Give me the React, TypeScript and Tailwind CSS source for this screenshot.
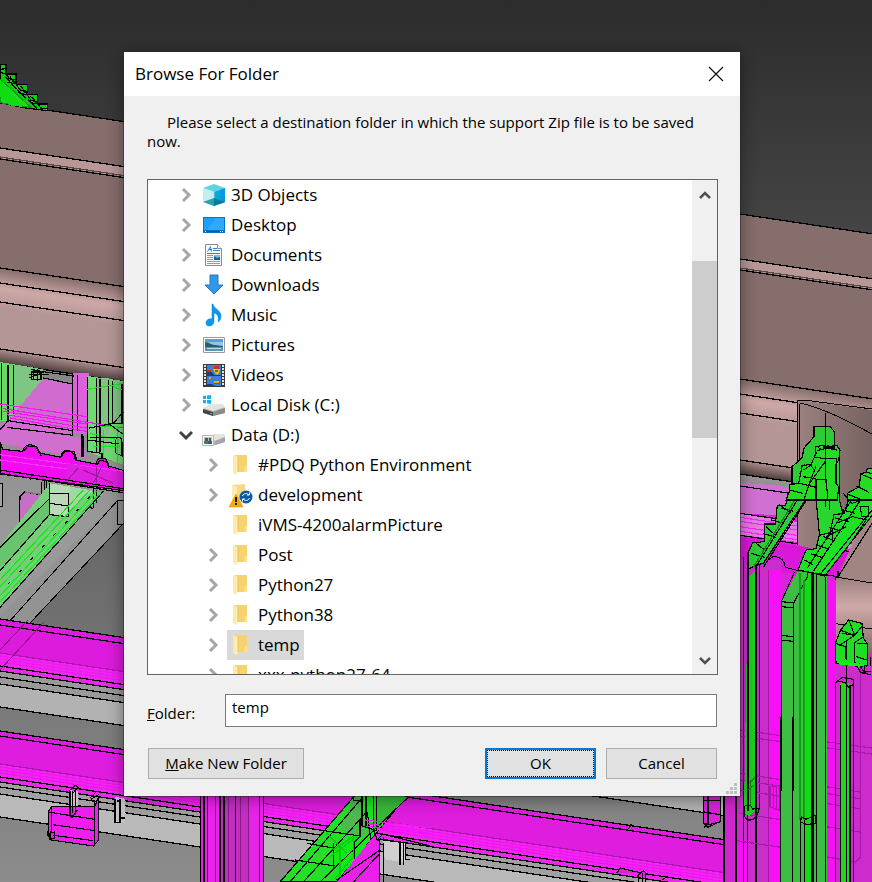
import type { ReactNode } from "react"

type IconName =
  | "objects"
  | "desktop"
  | "documents"
  | "downloads"
  | "music"
  | "pictures"
  | "videos"
  | "diskC"
  | "diskD"
  | "folder"
  | "sync"

type Row = {
  label: string
  icon: IconName
  child?: boolean
  open?: boolean
  leaf?: boolean
  selected?: boolean
}

const rows: Row[] = [
  { label: "3D Objects", icon: "objects" },
  { label: "Desktop", icon: "desktop" },
  { label: "Documents", icon: "documents" },
  { label: "Downloads", icon: "downloads" },
  { label: "Music", icon: "music" },
  { label: "Pictures", icon: "pictures" },
  { label: "Videos", icon: "videos" },
  { label: "Local Disk (C:)", icon: "diskC" },
  { label: "Data (D:)", icon: "diskD", open: true },
  { label: "#PDQ Python Environment", icon: "folder", child: true },
  { label: "development", icon: "sync", child: true },
  { label: "iVMS-4200alarmPicture", icon: "folder", child: true, leaf: true },
  { label: "Post", icon: "folder", child: true },
  { label: "Python27", icon: "folder", child: true },
  { label: "Python38", icon: "folder", child: true },
  { label: "temp", icon: "folder", child: true, selected: true },
  { label: "xxx-python27-64", icon: "folder", child: true },
]

const folderShape = (
  <>
    <path d="M5 1h12v17H5z" fill="#f6d271" />
    <path d="M15 12h2v6h-3z" fill="#ffe08a" />
    <path d="M3 1l5 2v15l-2 3-3-2z" fill="#ffe9a6" />
    <path d="M8 3v15l-2 3V4z" fill="#fff0bd" />
    <path d="M8 3v15" stroke="#e9bf55" />
  </>
)

const icons: Record<IconName, ReactNode> = {
  objects: (
    <>
      <path d="M11 0l11 4-11 4L0 4z" fill="#5ed3e2" />
      <path d="M0 4l11 4v14L0 18z" fill="#c5eef0" />
      <path d="M22 4L11 8v14l11-4z" fill="#05a9d6" />
      <path d="M22 4l-5 2v14l5-2z" fill="#0899dd" />
      <path d="M0 18l11-4v8z" fill="#2c9fae" />
      <path d="M11 14l11 4-11 4z" fill="#087d98" />
      <path d="M11 8v6" stroke="#8ae0ea" />
    </>
  ),
  desktop: (
    <>
      <path d="M0 3h22v16H0z" fill="#0b72c9" />
      <path d="M1 4h20v12H1z" fill="#1aa0f8" />
      <path d="M13 4h8v12H4z" fill="#2fa9fb" />
      <path d="M1 17h20v1H1z" fill="#085ba6" />
      <path d="M2 17h1v1H2zM17 17h1v1h-1zM19 17h1v1h-1z" fill="#fff" />
    </>
  ),
  documents: (
    <>
      <path d="M2.500 .5h12l4 4v17h-16z" fill="#fafafa" stroke="#8b8b8b" />
      <path d="M14.500 .5v4h4" fill="#fff" stroke="#8b8b8b" />
      <path d="M4.500 7.500l3-5 1 5M6 5.500h3" fill="none" stroke="#2387d6" />
      <path d="M10 4.500h4M10 6.500h7M4 9.500h13" stroke="#2387d6" />
      <path d="M4 11.500h6M4 13.500h6M4 15.500h6M4 17.500h13M4 19.500h13" stroke="#9a9a9a" />
      <path d="M11 11h6v5h-6z" fill="#1c5f96" />
      <path d="M11 11h6v2l-3 1-3-2z" fill="#72b9ea" />
    </>
  ),
  downloads: (
    <path d="M7 1h8v10h5l-9 9-9-9h5z" fill="#3496e8" stroke="#2079c6" />
  ),
  music: (
    <path
      d="M10 0c1 5 8 6 8 12 0 3-1 5-3 6 1-5 0-8-4-9v8c0 4-3 5-5 5s-3-1-3-3c0-3 3-5 6-4V0z"
      fill="#0c96ec"
      stroke="#0a83d3"
      strokeWidth=".5"
    />
  ),
  pictures: (
    <>
      <path d="M.5 3.500h21v15H.5z" fill="#fff" stroke="#9a9a9a" />
      <path d="M2 5h18v12H2z" fill="#8fc6ef" />
      <path d="M2 5h18v3H2z" fill="#549fdc" />
      <path d="M2 8c4 0 6 3 10 3 3 0 5 1 8 1v1H2z" fill="#2e5f58" />
      <path d="M2 13h18v4H2z" fill="#5c93b6" />
      <path d="M4 14.500h14" stroke="#b9dcef" />
    </>
  ),
  videos: (
    <>
      <path d="M0 0h22v23H0z" fill="#3a3a3a" />
      <path d="M2 1v21M20 1v21" stroke="#e4e4e4" strokeWidth="2" strokeDasharray="2 1" />
      <path d="M4 1h14v10H4zM4 12h14v10H4z" fill="#3c80d8" />
      <path d="M4 8h5l2 3H4zM4 20h5l3 2H4z" fill="#1c3f74" />
      <path d="M10 5h7l-1 4-2 2-2-2z" fill="#e5c31b" />
      <path d="M11 2h5l1 3h-6zM4 6h4v2H4zM11 18h6v2h-6z" fill="#cf2d26" />
      <path d="M6 13h2v2H6zM11 17h5v2h-5z" fill="#e8a91d" />
      <path d="M12 6h3v2h-3z" fill="#2e8a41" />
    </>
  ),
  diskC: (
    <>
      <path d="M0 15l7-4h13l2 3v5l-12 3-10-4z" fill="#b9b9b9" />
      <path d="M0 14l7-4h13l2 3-12 4z" fill="#e3e3e3" />
      <path d="M0 15l10 3v4L0 19z" fill="#464646" />
      <path d="M10 18l12-4v5l-12 3z" fill="#8b8b8b" />
      <path d="M7 19h2v1H7z" fill="#38d451" />
      <path d="M0 2l3-.4V5H0zM4 1.500L8 1v4H4zM0 6h3v3.500L0 9zM4 6h4v4l-4-.5z" fill="#10b3f0" />
    </>
  ),
  diskD: (
    <>
      <path d="M6 13l6-3h9l1 3v5l-10 3H6z" fill="#b9b9b9" />
      <path d="M8 12l4-2h9l1 3-10 4z" fill="#e4e4e4" />
      <path d="M12 17l10-4v5l-10 3z" fill="#a6a6a6" />
      <path d="M-.5 11.500h11v10h-11z" fill="#fff" stroke="#b4b4b4" />
      <path d="M1 13h8v7H1z" fill="#a9c5bc" />
      <path d="M2 14h3v3H2zM6 14h2v3H6z" fill="#7c4b32" />
      <path d="M1 17h4v3H1z" fill="#3e7c68" />
      <path d="M5 17h4v3H5z" fill="#315a8c" />
    </>
  ),
  folder: folderShape,
  sync: (
    <>
      <path d="M2 1l13-1v16H2z" fill="#f5d988" />
      <path d="M2 1l5 2v14H2z" fill="#ffedb4" />
      <path d="M6 10l7 13H-1z" fill="#f8ab0c" stroke="#e2860a" strokeWidth=".5" />
      <path d="M6 13v5M6 19v2" stroke="#191919" strokeWidth="2" />
      <circle cx="16" cy="13" r="6.500" fill="#0c59a5" />
      <path d="M12.500 12c1-3 5-3 6.500-1M19.500 14c-1 3-5 3-6.500 1M19.500 8.500V11H17M12.500 17.500V15H15" fill="none" stroke="#fff" />
    </>
  ),
}

function Icon({ name }: { name: IconName }) {
  return (
    <svg viewBox="0 0 22 23" className="h-[23px] w-[22px] shrink-0 overflow-visible" aria-hidden="true">
      {icons[name]}
    </svg>
  )
}

function TreeRow({ row }: { row: Row }) {
  return (
    <li role="treeitem" aria-selected={!!row.selected} className={row.child ? "flex h-[30px] pl-[51px]" : "flex h-[30px] pl-6"}>
      {row.leaf ? (
        <span className="w-7 shrink-0" />
      ) : (
        <button type="button" className="flex w-7 shrink-0 items-center justify-center pr-px">
          <svg viewBox="0 0 14 14" className="h-[14px] w-[14px]" fill="none" strokeWidth="3">
            {row.open ? (
              <path d="M1 4l6 6 6-6" stroke="#404040" />
            ) : (
              <path d="M4 1l6 6-6 6" stroke="#a6a6a6" />
            )}
          </svg>
        </button>
      )}
      <span className={row.selected ? "flex items-center gap-[6px] bg-[#d9d9d9] pr-1 pl-[3px]" : "flex items-center gap-[6px] pr-1 pl-[3px]"}>
        <Icon name={row.icon} />
        <span className="text-[17px] leading-[30px] whitespace-nowrap">{row.label}</span>
      </span>
    </li>
  )
}

// Long beams all fall at the same rate, so each edge is given by its height at the left side.
const at = (y: number, x: number) => y + x * 0.15

function Beam({ from, to, fill, x1 = 0, x2 = 872 }: { from: number; to: number; fill: string; x1?: number; x2?: number }) {
  return <polygon points={`${x1},${at(from, x1)} ${x2},${at(from, x2)} ${x2},${at(to, x2)} ${x1},${at(to, x1)}`} fill={fill} stroke="none" />
}

function Edges({ ys, x1 = 0, x2 = 872, color = "#000" }: { ys: number[]; x1?: number; x2?: number; color?: string }) {
  return (
    <>
      {ys.map((y) => (
        <path key={y} d={`M${x1} ${at(y, x1)}L${x2} ${at(y, x2)}`} stroke={color} strokeWidth="1.300" />
      ))}
    </>
  )
}

// Detailed parts are drawn on a grid three times finer than the scene.
function Part({ x, y, children }: { x: number; y: number; children: ReactNode }) {
  return (
    <g transform={`translate(${x} ${y}) scale(0.33333)`} stroke="#000" strokeWidth="3.600" fill="none">
      {children}
    </g>
  )
}

function Scene() {
  return (
    <svg
      viewBox="0 0 872 882"
      preserveAspectRatio="xMidYMid slice"
      shapeRendering="crispEdges"
      className="absolute inset-0 h-full w-full"
      aria-hidden="true"
    >
      <defs>
        <linearGradient id="sky" x1="0" y1="0" x2="0" y2="1">
          <stop offset="0" stopColor="#2c2c2c" />
          <stop offset=".26" stopColor="#444444" />
          <stop offset=".44" stopColor="#8c8c8c" />
          <stop offset=".62" stopColor="#9a9a9a" />
          <stop offset="1" stopColor="#888888" />
        </linearGradient>
        <linearGradient id="floor" x1="0" y1="520" x2="0" y2="882" gradientUnits="userSpaceOnUse">
          <stop offset="0" stopColor="#666666" />
          <stop offset="1" stopColor="#8c8c8c" />
        </linearGradient>
        <linearGradient id="lip" x1="0" y1="268" x2="0" y2="288" gradientUnits="userSpaceOnUse">
          <stop offset="0" stopColor="#866e6c" />
          <stop offset="1" stopColor="#cda8a7" />
        </linearGradient>
        <linearGradient id="lipFade" x1="0" y1="288" x2="0" y2="308" gradientUnits="userSpaceOnUse">
          <stop offset="0" stopColor="#cda8a7" />
          <stop offset="1" stopColor="#b59696" />
        </linearGradient>
        <linearGradient id="under" x1="0" y1="348" x2="0" y2="363" gradientUnits="userSpaceOnUse">
          <stop offset="0" stopColor="#b59493" />
          <stop offset="1" stopColor="#4d3f3e" />
        </linearGradient>
        <linearGradient id="tube" x1="0" y1="570" x2="0" y2="662" gradientUnits="userSpaceOnUse">
          <stop offset="0" stopColor="#8f7674" />
          <stop offset=".4" stopColor="#cfaaa8" />
          <stop offset="1" stopColor="#765f5d" />
        </linearGradient>
        <linearGradient id="cut" x1="798" y1="0" x2="872" y2="0" gradientUnits="userSpaceOnUse">
          <stop offset="0" stopColor="#9b8180" />
          <stop offset="1" stopColor="#776361" />
        </linearGradient>
      </defs>
      <rect width="872" height="882" fill="url(#sky)" />

      {/* floor and diagonal grey rail */}
      <path d="M124 522L30 622 0 655V882H872V560H124z" fill="url(#floor)" />
      <path d="M0 615L118 500h6v23L0 655z" fill="#939393" />
      <path d="M118 500L0 632M124 523L0 655M117 500h7M117 500v24h7" stroke="#000" fill="none" />

      {/* upper magenta beam and the grey rail under it */}
      <Beam from={619} to={671} fill="#dc1bdc" />
      <Beam from={653} to={676} fill="#e92ae9" />
      <Edges ys={[653]} color="#b414b4" />
      <Edges ys={[656, 659, 662]} color="#f516f5" />
      <Beam from={671} to={684} fill="#999999" />
      <Beam from={684} to={707} fill="#b2b2b2" />
      <Edges ys={[619, 625, 666, 671, 677, 684, 707]} />
      <path d="M44 622L0 670M28 620L0 650" stroke="#8f128f" fill="none" />

      {/* lower magenta beam */}
      <Beam from={731} to={782} fill="#df1ddf" />
      <Beam from={764} to={782} fill="#ea29ea" />
      <Edges ys={[764]} color="#b414b4" />
      <Edges ys={[767, 770, 773]} color="#f811f8" />
      <Beam from={782} to={794} fill="#a0a0a0" />
      <Beam from={794} to={817} fill="#b9b9b9" />
      <Edges ys={[731, 736, 777, 782, 787, 794, 817]} />

      {/* long brown beam */}
      <Beam from={103} to={149} fill="#866e6c" />
      <Beam from={148} to={158} fill="#b89797" />
      <Beam from={158} to={268} fill="#866e6c" />
      <g transform="matrix(1 .15 0 1 0 0)">
        <path d="M0 268h872v21H0z" fill="url(#lip)" />
        <path d="M0 288h872v20H0z" fill="url(#lipFade)" />
        <path d="M0 308h872v41H0z" fill="#b59696" />
        <path d="M0 348h872v15H0z" fill="url(#under)" />
      </g>
      <Edges ys={[157]} color="#5b4a49" />
      <Edges ys={[103, 148, 159, 268, 283, 302, 349, 363]} />

      {/* green rack above the beam */}
      <Part x={0} y={50}>
        <path d="M0 44h18v28h30v24h-8l12 8h30v22h-8l10 8h28v24h-8l10 4h28v20L70 173 0 158z" fill="#12c912" />
        <path d="M0 88l30 26 62 58-92-14z" fill="#24d826" stroke="#0a9c0d" />
        <path d="M0 88l48 56 20 27L30 166 0 140z" fill="#0fdd12" stroke="none" />
        <path d="M0 66l18 7 30 2v20l-10 8M2 58l16-2M18 72l10 14 20 4M30 80l12 14M48 102l12 18 20 4M62 108l12 16M80 132l12 18 18 6M90 138l16 14M112 160l10 14 18 2M16 80l32 36M46 112l32 34M84 148l28 28M20 96l30 6M54 128l26 6M94 158l18 4" />
      </Part>

      {/* pink and green frames, left */}
      <Part x={0} y={350}>
        <path d="M130 85l90 20v150L0 228z" fill="#d06cd0" stroke="none" />
        <path d="M0 36l130 22v28L20 214l-20-4z" fill="#7fc583" stroke="none" />
        <path d="M0 36l42 8v150l-20 20H0z" fill="#68da68" stroke="none" />
        <path d="M218 70h48v180h-48z" fill="#da63da" stroke="none" />
        <path d="M262 78l110 15v252l-110-40z" fill="#71d873" stroke="none" />
        <path d="M288 84h38v220h-38zM340 92h28v130h-28z" fill="#83c486" stroke="none" />
        <path d="M0 228l250 36 6 62L0 280z" fill="#cf70cf" stroke="none" />
        <path d="M24 212l194 30M20 232l200 24M22 214L0 240" />
        <path d="M4 40v170M24 46v170M40 46v146M218 72v182M232 74v168M262 80v226M290 84v224M300 86v220M326 90v132M338 92v130M366 98v120" />
        <path d="M92 58l44 8M94 66h30v22H94zM100 56v34M112 56v36M122 62v28M86 74h60M88 84l48-20M130 84l88 18M136 66l86 12M246 252v70M250 258v64M262 304l44 6v40M340 220l30-34M330 220h40M346 268c0 0 20-16 20 10v40l-20-10z" />
        <path d="M10 176l360 58M10 184l250 38M20 194l240 40M30 204l230 40M0 162l260 38" stroke="#f01bf0" />
        <path d="M250 120l120-20M282 230h70v110M310 240v96M270 250l86 20M280 290h80M340 110l24 10" stroke="#16e51a" />
        <path d="M268 234l60-12 40 30M270 262h90M262 270l96 12M300 240v60" />
        <path d="M0 276l8 22 60 6c4-26 42-28 48 4l66 14c4-30 40-28 44 8l62 12c6-26 34-24 38 6l46 14v60L0 372z" fill="#f20cf2" />
        <path d="M0 314l370 50M0 330l370 50" stroke="#ff35ff" />
        <path d="M200 340l170 28v50l-176-26z" fill="#e020e0" stroke="none" />
        <path d="M70 304l12-14h28l14 28M184 320l10-16h28l10 30M0 360l370 56M0 370l370 58M290 346l10-16 20 6 8 20M30 368l-4 10M96 374l-6 14" />
        <path d="M234 356l-34 36M290 350v50M250 360l90 40M310 340l-30 60" stroke="#9d179d" />
        <path d="M0 400h8v70H0" fill="#a3a3a3" />
        <path d="M60 440l14-14 70 12v60l-44 32-42-6z" fill="#c76fc7" />
        <path d="M74 426l128 18v92l-140-14" stroke="#777" />
        <path d="M124 396v50M134 394v60M140 394v60M150 398v50" />
        <path d="M150 400l160 30L0 772V588z" fill="#74cf78" stroke="none" />
        <path d="M150 446v50L0 654V588z" fill="#68c56d" stroke="none" />
        <path d="M150 400l62 10-8 90-54-8z" fill="#b9d9b9" stroke="none" />
        <path d="M210 410l70 12-76 60z" fill="#9fd8a2" stroke="none" />
        <path d="M148 446L0 592M148 494L0 662M148 400v94l58 6v-70h-56M150 460l56 8M280 474v-58M290 460v-40M264 470l16 6" />
        <path d="M250 420L0 690M270 420L0 710M290 424L0 738M300 430L0 756" stroke="#1ae61e" />
        <path d="M310 424L0 772" />
        <path d="M270 440L0 728" strokeDasharray="10 40" />
      </Part>

      {/* foot bracket, left */}
      <Part x={0} y={600}>
        <path d="M206 570l28 4v70l-28-4zM344 590l30 6v72l-30-4z" fill="#c8c0c8" stroke="none" />
        <path d="M146 632l10-12h128l12-30v130l-16 18-126-18-10-14z" fill="#ec1fec" />
        <path d="M154 622v72l-10 14M150 700l12-4 2 18-14 4zM284 600v134M144 636l140 22M158 674l128 18M160 706l120 16M210 574v70M218 572v66M226 570v66M206 574l20-18 8 6-14 16M206 644l10 8 16-22M270 594l20-20M272 598l24-14" />
        <path d="M346 598v70h14v-70M360 600v60M350 604h14M364 654h12" strokeWidth="5" />
      </Part>

      {/* post and green diagonal under the dialog */}
      <Part x={120} y={790}>
        <path d="M242 10h188v266H242z" fill="#c12fc1" stroke="none" />
        <path d="M242 10h58v266h-58zM386 10h46v266h-46z" fill="#e823e8" stroke="none" />
        <path d="M242 18v258M252 18v258M262 18v258M300 18v258M312 18v258M346 18v258M418 18v258M431 18v258" />
        <path d="M286 18v258M362 18v258M386 18v258M326 18v258" stroke="#8c188c" />
        <path d="M710 10h156L650 276H480z" fill="#25de28" />
        <path d="M700 20h80v100l-60 20-60-20z" fill="#4bbb50" stroke="none" />
        <path d="M770 20h96L760 120z" fill="#36b93b" stroke="none" />
        <path d="M730 18h30v94l-22 8zM640 170l100-40-10 70-90 68z" fill="#12ea18" stroke="none" />
        <path d="M726 18v90l44 14v-104M738 18v90M760 18v100M700 30l26 4M700 18v12M726 24L510 276M866 20L600 276M550 276L740 66M600 120l120 18M560 160l80 14v60M526 210l120 18M640 160v76M720 90v50l-16 16v50" />
        <path d="M640 180l60-40v60l-54 66M660 166v100M620 130l60 60M630 200l80-60" stroke="#08c90e" />
        <path d="M760 140l20-8v144H650z" fill="#ea20ea" stroke="none" />
        <path d="M770 150h8v126M790 140v136M700 276L780 190M760 120l12 30 16-18M780 180l-130 90" />
        <path d="M790 150l64 8v60l-60-10z" fill="#cfcfcf" stroke="none" />
        <path d="M790 150l60 8v68M840 154v72M856 158v50h14M780 130l150 38M742 66l10 80" />
        <path d="M736 90l194 24M740 100l190 30M742 108l160 30" stroke="#fa14fa" />
      </Part>
      <Part x={420} y={790}>
        <path d="M626 116l8-14M590 250l10-16 60 14M650 260l20-18 12 10M668 250v26M676 250v26M656 254v22M728 270l14-12M850 10v90l14 12 38-18V10z" fill="#d625d6" />
        <path d="M864 18v84l-12 10M852 66l48 8M852 32h48M850 100l18 4 32-8" />
      </Part>

      {/* right-hand side */}
      <path d="M740 492L872 511V882H724V560z" fill="#d726d7" />
      <Part x={736} y={480}>
        <path d="M12 0l400 60v60L12 100z" fill="#d070d0" stroke="none" />
        <path d="M12 0l160 8-30 10L12 8z" fill="#929292" stroke="none" />
        <path d="M12 100l360 54v56L12 164z" fill="#e67ae6" stroke="none" />
        <path d="M12 112l330 50M12 124l330 50M12 140l340 52M12 154l300 44" stroke="#f52af5" />
        <path d="M12 18l150 22M12 100l150 22M12 166l340 50" />
        <path d="M12 172l350 52-70 60-280-8z" fill="#d918d9" stroke="none" />
        <path d="M60 240c20-20 26 4 34 8 10-30 50-20 54 14l40 10" />
        <path d="M408 60L310 280 290 330 284 400 298 540 408 560z" fill="#a08583" stroke="none" />
        <path d="M408 130L300 300c-22 60-18 160 0 240" />
      </Part>
      <path d="M836 577L872 583V665L835 655C831 630 829 600 836 577z" fill="url(#tube)" />
      <path d="M836 577L872 583M831 623L872 629M836 577C829 600 831 630 835 655" stroke="#000" fill="none" />

      {/* notch in the beam where the racks stand */}
      <path d="M798 400L872 410V512L840 556L798 545z" fill="url(#cut)" />
      <path d="M797 545V401l7-1 68 9M800 403c26 6 52 20 72 31M799 404v80" stroke="#000" fill="none" />

      {/* magenta columns */}
      <Part x={736} y={480}>
        <path d="M-36 940H12V1206h-48z" fill="#cf25cf" stroke="none" />
        <path d="M12 240h124v966H12z" fill="#ca2eca" stroke="none" />
        <path d="M98 270h38v936H98zM-4 1080H36v126H-4zM268 300h32v906h-32z" fill="#f510f5" stroke="none" />
        <path d="M300 520h108v686H300z" fill="#cc2ccc" stroke="none" />
        <path d="M34 240v966M22 230v976M70 250v740M60 250v956" />
        <path d="M98 270v936M12 750l396 54M12 768l396 54M12 880l360 56M12 900l360 56M12 930l360 56M12 1000l360 56M0 1082l136 20M268 1130l92 16 14-16V560M102 920v60l30 12v-76zM112 914v76M122 914v76" stroke="#a819a8" />
        <path d="M0 940v266M-36 930v276" />

        <path d="M36 290l24-20v720l-20 20-16-12z" fill="#18d01d" stroke="none" />
        <path d="M36 260v732M60 260v730M24 984c2-10 18-14 26 4 14-6 20-4 18 4-8 32-40 40-44 8z" />
        <path d="M38 910l20-18M44 900v80M36 930l18-14" stroke="#078e0a" />

        <path d="M136 365l48-88 90 0v929H134V480z" fill="#3dbd41" stroke="none" />
        <path d="M204 286h28v740h-28zM204 1030h28v176h-28z" fill="#12dc16" stroke="none" />
        <path d="M136 365v115l-2 726M172 370v110l-2 726M136 365l40-90M172 372l42-82v-14M138 365l36 4M138 380l36 4M134 466l36 4M134 480l36 4M228 280v926M232 280v926M241 280v926M268 290v916M194 1010v196M206 1020v186" />
        <path d="M192 280v740M204 300v720" stroke="#0ca50f" />
        <path d="M196 1010l14 8 28-12v24l-26 4-18-8z" />

        <path d="M312 610h30v596h-30z" fill="#1fd423" stroke="none" />
        <path d="M298 606v600M314 614v592M332 490v716M342 614v592M352 606v600M298 610l20-18 34 6v16l-14 8-10-14-24-6" />

        {/* stepped racks */}
        <path d="M240 55v-160h50l20 20V60l10 40-54 90-14-10z" fill="#28d62d" />
        <path d="M36 258v-40l14-30h12l24-4v-52h32l6-56h24l20-58V-40l30-26 6-30 30-34v-30h48l14 16v60l-48 84L82 250 60 256l-24 12z" fill="#2fcb34" />
        <path d="M90 140l26 24M60 190l26 20M130 74l34 24M168 18l34 22M204-46l30 30M46 220l40 12M80 160l40 12M106 120l38 10M134 84l38 10M160 44l38 10M190 4l40 8M62 256L240-30M82 262L250 0" />
        <path d="M52 262L232-30" stroke="#07890a" />
        <path d="M192-20h70v80h-50zM228-40v90M240-30v90M268-200v280M280-60v150" />
        <path d="M186 270l24-60 30-4 10-40 32-8 12-54 30-4 20-60 30-14 20-60h30v120L266 288l-30-8z" fill="#1ee024" />
        <path d="M206 240l24 14M226 222l36 12M244 196l36 12M262 170l34 12M280 142l38 12M298 114l40 12M316 88l40 12M340 50l40 12M360 20l40 12M232 274L400 20M214 264L360 40M250 286L408 90M300 130l50-20 40 10-40 60M270 170l60-30" />
        <path d="M322 40l26 30 30-10M372 80h26v30h-20zM290 150v40M240 280l66 10v-18" />

        <path d="M298 490l16-40 24-30 40 10 4 44 12 18v64l-30 4-34-14-30 4z" fill="#1fdc24" />
        <path d="M340 424l16 42 24-30M356 466l-40-14M356 466l-46 30M318 460l38 6M332 480v60M298 490l32 10v38M380 472l-24 16v60l36 10M364 490h28M360 530l32 10" />
        <path d="M300 540l92 14-20 6-60-6z" fill="#14f019" stroke="none" />
        <path d="M364 560l10 18 30 6M374 560l12 20M386 556v20l20-2M404 532v26" />
      </Part>

      {/* rack heads */}
      <Part x={736} y={200}>
        <path d="M240 760l-2-20 24-4 14 4 26-4 10 14-4 30-8 14v56l8 10-4 40H150l10-26v-20l28-4 10-52 28-6z" fill="#24dd22" />
        <path d="M334 900v-20l36-20 4-38 18-6 18 6v78z" fill="#24dd22" />
        <path d="M244 752l24-6v30h34M268 776v74M302 776v74M236 772l34 4M202 810l22-14 10 12M240 800l-20 50-16 50M240 838h30l6 62M240 838v62M190 850l50 12M200 830l40 6M160 870l40 10M268 784l-50 70M262 742l40 8M246 742l10 6M276 736v12M290 736v14M374 822l34 14M334 882l40 16M370 862l30 16" />
        <path d="M262 742h36" strokeWidth="8" />
      </Part>
    </svg>
  )
}

export default function App() {
  return (
    <main className="relative min-h-screen overflow-hidden pt-[52px] pr-[132px] pb-[86px] pl-[124px] font-['Open_Sans','Noto_Sans',sans-serif] text-black">
      <Scene />
      <form
        role="dialog"
        aria-labelledby="dialog-title"
        onSubmit={(e) => e.preventDefault()}
        className="relative bg-[#f0f0f0] shadow-[0_0_0_1px_rgba(40,40,40,0.5),0_2px_16px_rgba(0,0,0,0.45)]"
      >
        <header className="flex h-11 items-center justify-between bg-white pr-4 pl-[11px]">
          <h1 id="dialog-title" className="text-[17px] leading-6">Browse For Folder</h1>
          <button type="button" aria-label="Close">
            <svg viewBox="0 0 16 16" className="h-4 w-4" fill="none" stroke="#111" strokeWidth="1.200">
              <path d="M1 1l14 14M15 1L1 15" />
            </svg>
          </button>
        </header>

        <div className="px-[23px] pt-[17px] pb-[17px]">
          <p className="indent-5 text-[15px] leading-[19px]">
            Please select a destination folder in which the support Zip file is to be saved now.
          </p>

          <div className="mt-7 -mr-px flex h-[496px] border border-[#646464] bg-white">
            <ul role="tree" className="min-w-0 flex-1 overflow-hidden">
              {rows.map((row) => (
                <TreeRow key={row.label} row={row} />
              ))}
            </ul>
            <div className="flex w-[25px] flex-col items-center bg-[#f0f0f0]">
              <button type="button" className="flex h-[30px] w-full items-center justify-center">
                <svg viewBox="0 0 12 12" className="h-3 w-3" fill="none" stroke="#505050" strokeWidth="2.500">
                  <path d="M1 9l5-5 5 5" />
                </svg>
              </button>
              <div className="mt-[51px] h-[177px] w-full bg-[#cdcdcd]" />
              <button type="button" className="mt-auto flex h-[26px] w-full items-center justify-center">
                <svg viewBox="0 0 12 12" className="h-3 w-3" fill="none" stroke="#505050" strokeWidth="2.500">
                  <path d="M1 3l5 5 5-5" />
                </svg>
              </button>
            </div>
          </div>

          <div className="mt-[19px] flex items-center">
            <label htmlFor="folder" className="w-[78px] pt-[6px] text-[15px] leading-[19px]">
              <u>F</u>older:
            </label>
            <input
              id="folder"
              defaultValue="temp"
              className="h-[33px] min-w-0 flex-1 border border-[#7a7a7a] bg-white px-[6px] pb-2 text-[15px] leading-[19px] outline-none"
            />
          </div>

          <div className="mt-[21px] flex gap-[10px] pl-px text-[15px] leading-[19px]">
            <button type="button" className="mr-auto h-[31px] w-[156px] border border-[#adadad] bg-[#e1e1e1]">
              <u>M</u>ake New Folder
            </button>
            <button type="submit" className="h-[31px] w-[111px] border-2 border-[#0078d7] bg-[#e1e1e1]">
              <span className="flex h-full items-center justify-center border border-dotted border-black">OK</span>
            </button>
            <button type="button" className="h-[31px] w-[111px] border border-[#adadad] bg-[#e1e1e1]">
              Cancel
            </button>
          </div>
        </div>

        <svg viewBox="0 0 12 12" className="absolute right-[2px] bottom-px h-3 w-3" fill="#bfbfbf" aria-hidden="true">
          <path d="M8 0h3v3H8zM4 4h3v3H4zM8 4h3v3H8zM0 8h3v3H0zM4 8h3v3H4zM8 8h3v3H8z" />
        </svg>
      </form>
    </main>
  )
}
